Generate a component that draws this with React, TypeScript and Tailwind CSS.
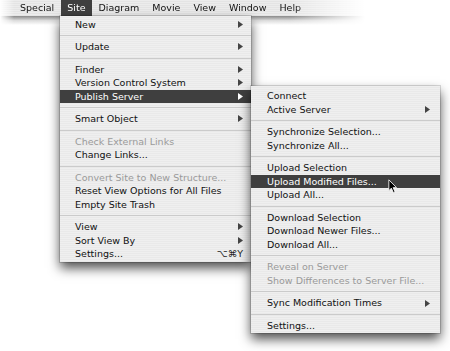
import React from "react";

type Item =
  | { sep: true }
  | { t: string; arrow?: boolean; hl?: boolean; dis?: boolean; sc?: string };

const S: Item = { sep: true };

const mainItems: Item[] = [
  { t: "New", arrow: true },
  S,
  { t: "Update", arrow: true },
  S,
  { t: "Finder", arrow: true },
  { t: "Version Control System", arrow: true },
  { t: "Publish Server", arrow: true, hl: true },
  S,
  { t: "Smart Object", arrow: true },
  S,
  { t: "Check External Links", dis: true },
  { t: "Change Links..." },
  S,
  { t: "Convert Site to New Structure...", dis: true },
  { t: "Reset View Options for All Files" },
  { t: "Empty Site Trash" },
  S,
  { t: "View", arrow: true },
  { t: "Sort View By", arrow: true },
  { t: "Settings...", sc: "⌥⌘Y" },
];

const subItems: Item[] = [
  { t: "Connect" },
  { t: "Active Server", arrow: true },
  S,
  { t: "Synchronize Selection..." },
  { t: "Synchronize All..." },
  S,
  { t: "Upload Selection" },
  { t: "Upload Modified Files...", hl: true },
  { t: "Upload All..." },
  S,
  { t: "Download Selection" },
  { t: "Download Newer Files..." },
  { t: "Download All..." },
  S,
  { t: "Reveal on Server", dis: true },
  { t: "Show Differences to Server File...", dis: true },
  S,
  { t: "Sync Modification Times", arrow: true },
  S,
  { t: "Settings..." },
];

function Arrow({ white }: { white?: boolean }) {
  return (
    <svg width="5" height="7" viewBox="0 0 5 7">
      <polygon points="0,0 5,3.5 0,7" fill={white ? "#ffffff" : "#444444"} />
    </svg>
  );
}

function Menu({ items, pl, pr }: { items: Item[]; pl: string; pr: string }) {
  return (
    <div className="flex flex-col">
      {items.map((it, i) =>
        "sep" in it ? (
          <div key={i} className="h-[9px] flex items-center">
            <div className="w-full h-px bg-[#cbcbcb]" />
          </div>
        ) : (
          <div
            key={i}
            className={
              "h-[13.5px] flex items-center justify-between leading-none " +
              pl +
              " " +
              pr +
              " " +
              (it.hl
                ? "bg-[#3f3f3f] text-white"
                : it.dis
                ? "text-[#9a9a9a]"
                : "text-[#111111]")
            }
          >
            <span className="whitespace-nowrap">{it.t}</span>
            {it.arrow && <Arrow white={it.hl} />}
            {it.sc && <span className="whitespace-nowrap text-[#222]">{it.sc}</span>}
          </div>
        )
      )}
    </div>
  );
}

function Cursor() {
  return (
    <svg width="10" height="15" viewBox="0 0 12 18">
      <path
        d="M1 1 L1 14 L4 11 L6.5 16.5 L8.5 15.6 L6.2 10.3 L10.2 10.3 Z"
        fill="#000"
        stroke="#fff"
        strokeWidth="1"
        strokeLinejoin="round"
      />
    </svg>
  );
}

export default function App() {
  const barItems = ["Special", "Site", "Diagram", "Movie", "View", "Window", "Help"];
  return (
    <div
      className="relative w-[450px] h-[351px] bg-white overflow-hidden text-[9.5px]"
      style={{ fontFamily: '"DejaVu Sans", sans-serif' }}
    >
      {/* menu bar */}
      <div className="w-[370px] flex flex-col [mask-image:linear-gradient(to_right,transparent_0px,black_14px,black_290px,transparent_365px)]">
        <div className="h-[16px] flex items-stretch pl-[13.5px] bg-[repeating-linear-gradient(to_bottom,#ececec_0px,#ececec_1px,#e4e4e4_1px,#e4e4e4_2px)]">
          {barItems.map((b) => (
            <div
              key={b}
              className={
                "px-[6.5px] flex items-center leading-none " +
                (b === "Site" ? "bg-[#3f3f3f] text-white" : "text-[#111]")
              }
            >
              {b}
            </div>
          ))}
        </div>
        <div className="h-[9px] bg-gradient-to-b from-[#8a8a8a] via-[#dcdcdc] to-white" />
      </div>

      {/* Site menu */}
      <div className="absolute left-[60px] top-[16px] w-[191px] pt-[1.5px] pb-[1.5px] bg-[repeating-linear-gradient(to_bottom,#efefef_0px,#efefef_1px,#e9e9e9_1px,#e9e9e9_2px)] shadow-[0_0_0_1px_rgba(0,0,0,0.14),0_6px_11px_rgba(0,0,0,0.7)]">
        <Menu items={mainItems} pl="pl-[15px]" pr="pr-[8px]" />
      </div>

      {/* Publish Server submenu */}
      <div className="absolute left-[251px] top-[86px] w-[189px] pt-[3.25px] pb-[1px] bg-[repeating-linear-gradient(to_bottom,#efefef_0px,#efefef_1px,#e9e9e9_1px,#e9e9e9_2px)] shadow-[0_0_0_1px_rgba(0,0,0,0.14),0_6px_11px_rgba(0,0,0,0.7)]">
        <Menu items={subItems} pl="pl-[16px]" pr="pr-[10px]" />
      </div>

      <div className="absolute left-[388px] top-[179px]">
        <Cursor />
      </div>
    </div>
  );
}
